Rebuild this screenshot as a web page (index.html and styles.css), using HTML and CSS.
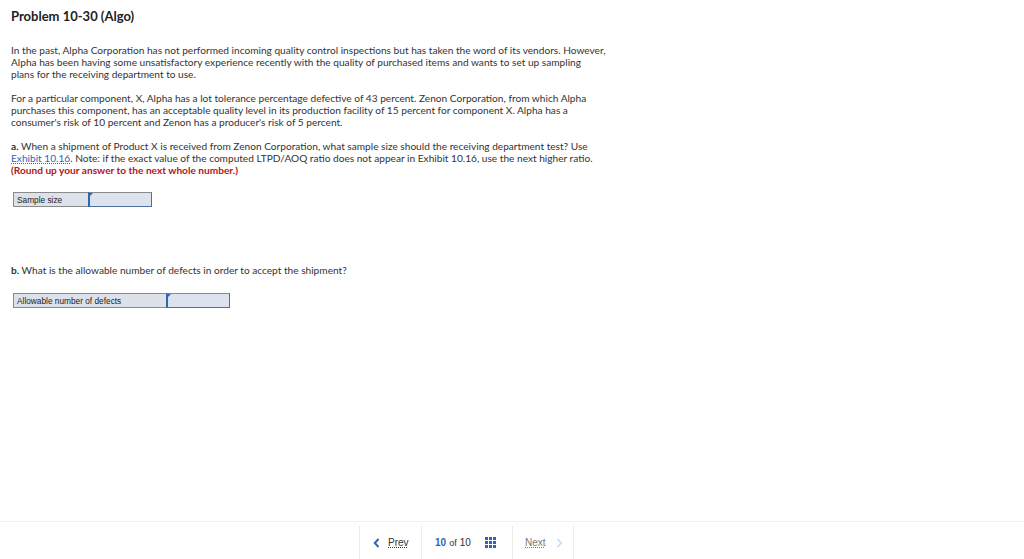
FILE: index.html
```html
<!DOCTYPE html>
<html lang="en">
  <head>
    <meta charset="UTF-8" />
    <title>Problem 10-30 (Algo)</title>
    <link rel="stylesheet" href="styles.css">
  </head>
  <body>
    <div class="page">
      <div class="problem">
        <h1 class="problem-title">Problem 10-30 (Algo)</h1>

        <p class="problem-text">
          In the past, Alpha Corporation has not performed incoming quality control inspections but has taken the word of its vendors. However,<br />
          Alpha has been having some unsatisfactory experience recently with the quality of purchased items and wants to set up sampling<br />
          plans for the receiving department to use.
        </p>

        <p class="problem-text">
          For a particular component, X, Alpha has a lot tolerance percentage defective of 43 percent. Zenon Corporation, from which Alpha<br />
          purchases this component, has an acceptable quality level in its production facility of 15 percent for component X. Alpha has a<br />
          consumer's risk of 10 percent and Zenon has a producer's risk of 5 percent.
        </p>

        <p class="problem-text">
          <b>a.</b> When a shipment of Product X is received from Zenon Corporation, what sample size should the receiving department test? Use<br />
          <a class="problem-link" href="#">Exhibit 10.16</a>. Note: if the exact value of the computed LTPD/AOQ ratio does not appear in Exhibit 10.16, use the next higher ratio.<br />
          <span class="problem-hint">(Round up your answer to the next whole number.)</span>
        </p>

        <!-- answer box a -->
        <div class="answer answer-small">
          <span class="answer-label">Sample size</span>
          <span class="answer-input"></span>
        </div>

        <p class="problem-text"><b>b.</b> What is the allowable number of defects in order to accept the shipment?</p>

        <div class="answer answer-wide">
          <span class="answer-label">Allowable number of defects</span>
          <span class="answer-input"></span>
        </div>
      </div>

      <div class="footer">
        <div class="footer-nav">
          <a class="nav-item nav-prev" href="#">
            <svg class="nav-chevron" width="7" height="10" viewBox="0 0 7 10">
              <path d="M5.5 1 L1.8 5 L5.5 9" fill="none" stroke="#2f66b3" stroke-width="2" />
            </svg>
            <span class="nav-word">Prev</span>
          </a>
          <div class="nav-item nav-pages">
            <span class="nav-current">10</span>
            <span class="nav-of">of</span>
            <span class="nav-total">10</span>
            <svg class="nav-grid" width="11" height="11" viewBox="0 0 11 11">
              <rect x="0" y="0" width="3" height="3" fill="#2f66b3" />
              <rect x="4" y="0" width="3" height="3" fill="#2f66b3" />
              <rect x="8" y="0" width="3" height="3" fill="#2f66b3" />
              <rect x="0" y="4" width="3" height="3" fill="#2f66b3" />
              <rect x="4" y="4" width="3" height="3" fill="#2f66b3" />
              <rect x="8" y="4" width="3" height="3" fill="#2f66b3" />
              <rect x="0" y="8" width="3" height="3" fill="#2f66b3" />
              <rect x="4" y="8" width="3" height="3" fill="#2f66b3" />
              <rect x="8" y="8" width="3" height="3" fill="#2f66b3" />
            </svg>
          </div>
          <span class="nav-item nav-next">
            <span class="nav-word nav-disabled">Next</span>
            <svg class="nav-chevron" width="7" height="10" viewBox="0 0 7 10">
              <path d="M1.5 1 L5.2 5 L1.5 9" fill="none" stroke="#c9d8ee" stroke-width="1.6" />
            </svg>
          </span>
        </div>
      </div>
    </div>
  </body>
</html>
```

FILE: styles.css
```css
* {
  margin: 0;
  padding: 0;
  box-sizing: border-box;
}

body {
  font-family: Lato, "Open Sans", sans-serif;
  color: #333;
}

.page {
  height: 100vh;
  display: flex;
  flex-direction: column;
}

.problem {
  padding: 8px 11px 0 11px;
}

.problem-title {
  font-size: 13px;
  font-weight: bold;
  color: #222;
  line-height: 16px;
  margin-bottom: 20px;
}

.problem-text {
  font-size: 10.15px;
  line-height: 12px;
  white-space: nowrap;
  margin-bottom: 12px;
}

.problem-link {
  color: #2f66b3;
  text-decoration: underline dotted;
}

.problem-hint {
  color: #b0141d;
  font-weight: bold;
}

.answer {
  display: flex;
  height: 15px;
  margin-left: 2px;
  font-family: "Liberation Sans", Arial, sans-serif;
  font-size: 8.3px;
}

.answer-small {
  width: 139px;
  margin-top: 16px;
  margin-bottom: 57px;
}

.answer-wide {
  width: 217px;
  margin-top: 17px;
}

.answer-label {
  flex: none;
  background: #dde1ea;
  border: 1px solid #8a8a8a;
  border-right: none;
  padding: 2px 0 0 3px;
  color: #222;
}

.answer-small .answer-label {
  width: 75px;
}

.answer-wide .answer-label {
  width: 153px;
}

.answer-input {
  flex: 1;
  position: relative;
  background: #dce3ee;
  border: 1px solid #8a8a8a;
  border-left: 2px solid #2f66b3;
  border-bottom-color: #4c6f9d;
  border-right-color: #4c6f9d;
}

.answer-input::before {
  content: "";
  position: absolute;
  left: 0;
  top: 0;
  border-top: 3px solid #2f66b3;
  border-right: 3px solid transparent;
  border-bottom: 3px solid transparent;
}

.footer {
  margin-top: auto;
  border-top: 1px solid #f0f0f0;
  height: 38px;
  padding-left: 359px;
}

.footer-nav {
  display: flex;
  height: 100%;
  padding-top: 4px;
}

.nav-item {
  display: flex;
  align-items: center;
  border-left: 1px solid #ececec;
  font-family: "Liberation Sans", Arial, sans-serif;
  font-size: 10px;
  color: #333;
  text-decoration: none;
}

.nav-prev {
  width: 62px;
  padding-left: 13px;
}

.nav-prev .nav-word {
  margin-left: 8px;
}

.nav-word {
  text-decoration: underline dotted;
}

.nav-pages {
  width: 91px;
  padding-left: 13px;
}

.nav-current {
  color: #2f66b3;
  font-weight: bold;
}

.nav-of {
  margin: 0 3px;
  font-size: 9px;
}

.nav-grid {
  margin-left: 14px;
}

.nav-next {
  width: 62px;
  padding-left: 12px;
  border-right: 1px solid #ececec;
}

.nav-disabled {
  color: #777;
}

.nav-next .nav-chevron {
  margin-left: 10px;
}
```
